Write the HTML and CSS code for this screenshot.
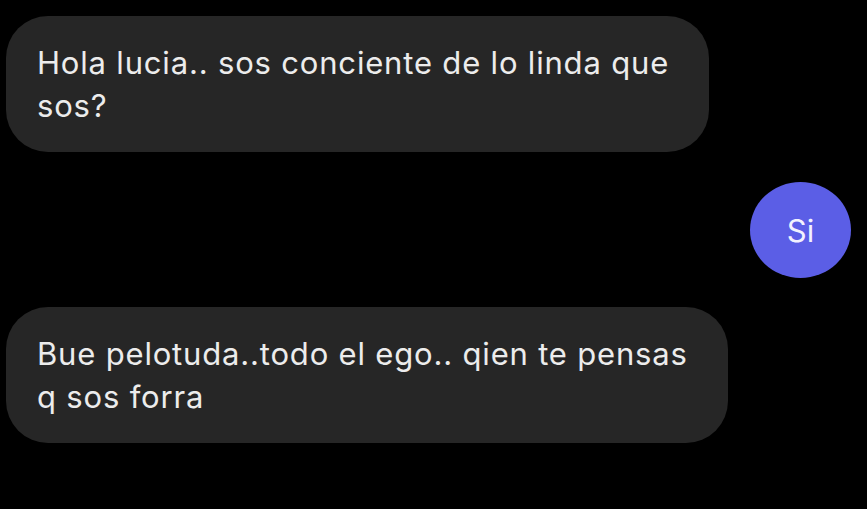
FILE: index.html
```html
<!DOCTYPE html>
<html lang="es">
<head>
<meta charset="utf-8">
<link rel="stylesheet" href="styles.css">
</head>
<body>
<div class="chat">
  <div class="bubble in first">Hola lucia.. sos conciente de lo linda que<br>sos?</div>
  <div class="bubble out">Si</div>
  <div class="bubble in">Bue pelotuda..todo el ego.. qien te pensas<br>q sos forra</div>
</div>
</body>
</html>
```
FILE: styles.css
```css
html, body {
  margin: 0;
  padding: 0;
  background: #000;
}
body {
  width: 867px;
  height: 509px;
  overflow: hidden;
}
.chat {
  display: flex;
  flex-direction: column;
  align-items: flex-start;
  padding: 16px 16px 0 6px;
  font-family: Inter, "Liberation Sans", Arial, sans-serif;
  font-size: 31px;
  color: #ececec;
}
.bubble {
  box-sizing: border-box;
}
.in {
  background: #262626;
  border-radius: 42px;
  padding: 25px 40px 25px 31px;
  line-height: 43px;
  height: 136px;
  white-space: nowrap;
  letter-spacing: 0.82px;
}
.out {
  align-self: flex-end;
  background: #5b5ee6;
  width: 101px;
  height: 96px;
  border-radius: 50%;
  display: flex;
  align-items: center;
  justify-content: center;
  margin: 30px 0 29px;
  color: #f2f2ff;
}
```
